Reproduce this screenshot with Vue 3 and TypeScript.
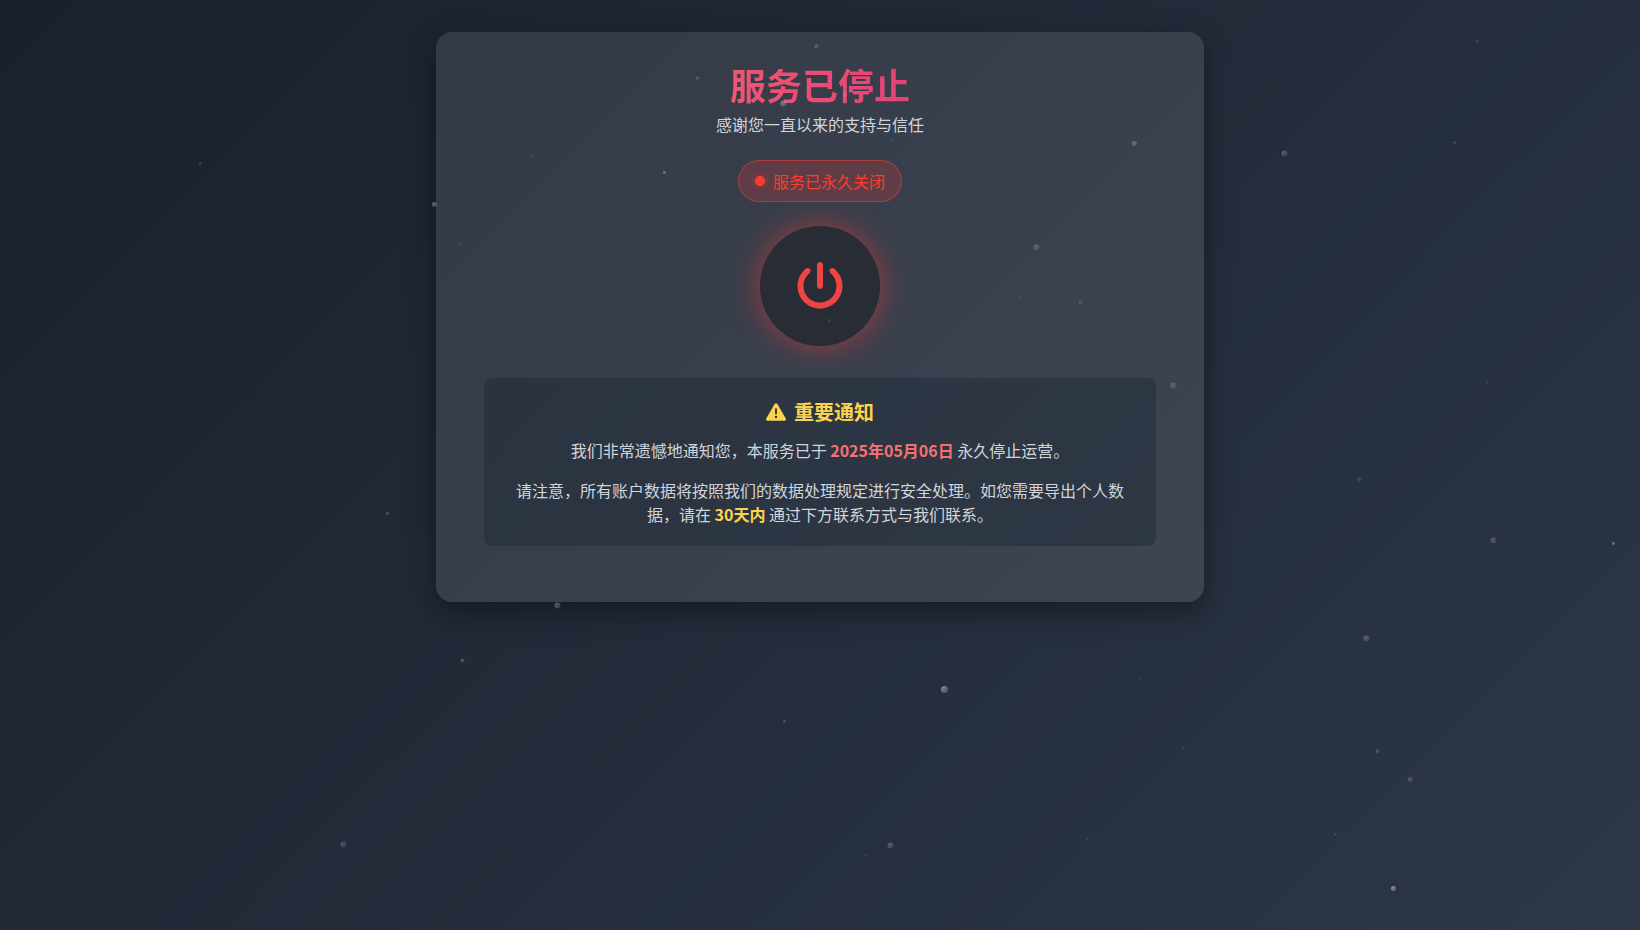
<script setup lang="ts">
interface Particle {
  x: number
  y: number
  size: number
  alpha: number
}

const particles: Particle[] = [
  [816, 46, 4, 0.35], [697, 78, 4, 0.25], [783, 103, 6, 0.5], [845, 94, 4, 0.2],
  [891, 140, 4, 0.08], [804, 318, 1, 0.3], [829, 320, 3, 0.2], [800, 396, 2, 0.08],
  [1173, 385, 6, 0.28], [200, 163, 3, 0.25], [434, 204, 5, 0.5], [459, 244, 4, 0.08],
  [524, 94, 1, 0.3], [532, 156, 2, 0.35], [664, 172, 3, 0.6], [1111, 130, 1, 0.2],
  [1134, 143, 5, 0.4], [1284, 153, 6, 0.35], [1036, 247, 6, 0.3], [1019, 297, 2, 0.25],
  [1080, 302, 4, 0.22], [1144, 315, 1, 0.1], [1477, 41, 4, 0.15], [1454, 142, 3, 0.25],
  [1321, 263, 1, 0.1], [1487, 382, 2, 0.3], [1359, 479, 4, 0.25], [1493, 540, 6, 0.32],
  [1613, 543, 3, 0.6], [1366, 638, 6, 0.35], [1377, 751, 4, 0.3], [1410, 779, 5, 0.3],
  [1335, 834, 2, 0.35], [1393, 888, 5, 0.7], [1619, 915, 1, 0.35], [944, 689, 7, 0.6],
  [784, 721, 3, 0.35], [1140, 679, 2, 0.2], [1183, 747, 2, 0.25], [890, 845, 6, 0.35],
  [866, 855, 3, 0.15], [1087, 839, 2, 0.2], [387, 513, 3, 0.4], [557, 605, 6, 0.4],
  [462, 660, 4, 0.35], [536, 768, 2, 0.12], [343, 844, 6, 0.28],
].map(([x, y, size, alpha]) => ({ x, y, size, alpha }))
</script>

<template>
  <div class="page">
    <main class="card">
      <header class="header">
        <h1 class="title">服务已停止</h1>
        <p class="subtitle">感谢您一直以来的支持与信任</p>
      </header>

      <div class="status" role="status">
        <span class="status-dot"></span>
        <span>服务已永久关闭</span>
      </div>

      <div class="power">
        <svg class="power-icon" viewBox="0 0 512 512" aria-hidden="true">
          <path d="M288 32c0-17.7-14.3-32-32-32s-32 14.3-32 32V256c0 17.7 14.3 32 32 32s32-14.3 32-32V32zM143.5 120.6c13.6-11.3 15.4-31.5 4.1-45.1s-31.5-15.4-45.1-4.1C49.7 115.4 16 181.8 16 256c0 132.5 107.5 240 240 240s240-107.5 240-240c0-74.2-33.8-140.6-86.6-184.6c-13.6-11.3-33.8-9.4-45.1 4.1s-9.4 33.8 4.1 45.1c38.9 32.3 63.5 81 63.5 135.4c0 97.2-78.8 176-176 176s-176-78.8-176-176c0-54.4 24.7-103.1 63.5-135.4z" />
        </svg>
      </div>

      <section class="notice" aria-labelledby="notice-title">
        <h2 id="notice-title" class="notice-title">
          <svg class="notice-icon" viewBox="0 0 512 512" aria-hidden="true">
            <path d="M256 32c14.2 0 27.3 7.5 34.5 19.8l216 368c7.3 12.4 7.3 27.7 .2 40.1S486.3 480 472 480H40c-14.3 0-27.6-7.7-34.7-20.1s-7-27.8 .2-40.1l216-368C228.7 39.5 241.8 32 256 32zm0 128c-13.3 0-24 10.7-24 24V296c0 13.3 10.7 24 24 24s24-10.7 24-24V184c0-13.3-10.7-24-24-24zm32 224a32 32 0 1 0 -64 0 32 32 0 1 0 64 0z" />
          </svg>
          <span>重要通知</span>
        </h2>
        <p class="notice-text">
          我们非常遗憾地通知您，本服务已于 <strong class="date">2025年05月06日</strong> 永久停止运营。
        </p>
        <p class="notice-text">
          请注意，所有账户数据将按照我们的数据处理规定进行安全处理。如您需要导出个人数据，请在 <strong class="deadline">30天内</strong> 通过下方联系方式与我们联系。
        </p>
      </section>
    </main>

    <svg class="particles" viewBox="0 0 1640 930" preserveAspectRatio="xMidYMid slice" aria-hidden="true">
      <defs>
        <linearGradient id="particle-fill" x1="0" y1="0" x2="1" y2="1">
          <stop offset="0" stop-color="#fff" stop-opacity="0.8" />
          <stop offset="1" stop-color="#fff" stop-opacity="0.2" />
        </linearGradient>
      </defs>
      <circle
        v-for="(p, i) in particles"
        :key="i"
        :cx="p.x + 0.5"
        :cy="p.y + 0.5"
        :r="p.size / 2"
        :opacity="p.alpha"
        fill="url(#particle-fill)"
      />
    </svg>
  </div>
</template>

<style>
body {
  margin: 0;
  background: #1a202c;
}
</style>

<style scoped>
.page {
  position: relative;
  box-sizing: border-box;
  min-height: 100vh;
  padding: 32px 16px;
  overflow: hidden;
  background: linear-gradient(135deg, #1a202c 0%, #2d3748 100%);
  font-family: "Noto Sans CJK SC", sans-serif;
  font-size: 16px;
  line-height: 24px;
  color: #fff;
}

.card {
  box-sizing: border-box;
  display: flex;
  flex-direction: column;
  align-items: center;
  max-width: 768px;
  margin: 0 auto;
  padding: 32px 48px 56px;
  border-radius: 16px;
  background: rgba(255, 255, 255, 0.1);
  box-shadow: 0 10px 30px rgba(0, 0, 0, 0.4);
  text-align: center;
}

.header {
  width: 100%;
}

.title {
  margin: 0 0 8px;
  font-size: 36px;
  line-height: 40px;
  font-weight: 700;
  color: transparent;
  background: linear-gradient(to right, #f87171, #db2777);
  background-clip: text;
  -webkit-background-clip: text;
}

.subtitle {
  margin: 0;
  color: #d1d5db;
}

.status {
  display: flex;
  align-items: center;
  gap: 8px;
  margin-top: 24px;
  padding: 8px 16px;
  border: 1px solid rgba(255, 59, 48, 0.5);
  border-radius: 999px;
  background: rgba(255, 59, 48, 0.2);
  color: #ff3b30;
}

.status-dot {
  width: 10px;
  height: 10px;
  border-radius: 50%;
  background: #ff3b30;
  box-shadow: 0 0 0 4px rgba(255, 59, 48, 0.1);
}

.power {
  display: flex;
  align-items: center;
  justify-content: center;
  width: 120px;
  height: 120px;
  margin: 24px 0 32px;
  border-radius: 50%;
  background: #282c35;
  box-shadow: 0 0 30px rgba(255, 59, 48, 0.5);
}

.power-icon {
  width: 48px;
  height: 48px;
  fill: #ef4444;
}

.notice {
  box-sizing: border-box;
  width: 100%;
  padding: 20px;
  border-radius: 8px;
  background: rgba(31, 41, 55, 0.5);
}

.notice-title {
  display: flex;
  align-items: center;
  justify-content: center;
  gap: 8px;
  margin: 0 0 12px;
  font-size: 20px;
  line-height: 28px;
  font-weight: 700;
  color: #fcd34d;
}

.notice-icon {
  width: 20px;
  height: 20px;
  fill: currentColor;
}

.notice-text {
  margin: 0;
  color: #d1d5db;
}

.notice-text + .notice-text {
  margin-top: 16px;
}

.date,
.deadline {
  font-weight: 600;
}

.date {
  color: #f87171;
}

.deadline {
  color: #fcd34d;
}

.particles {
  position: absolute;
  inset: 0;
  width: 100%;
  height: 100%;
  pointer-events: none;
}
</style>
